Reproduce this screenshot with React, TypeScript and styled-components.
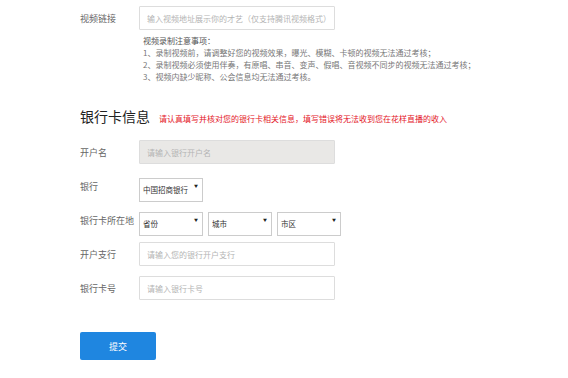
import React from "react";
import styled, { createGlobalStyle } from "styled-components";

const GlobalStyle = createGlobalStyle`
	html, body {
		margin: 0;
		padding: 0;
		background: #fff;
		font-family: "Noto Sans CJK SC", "Liberation Sans", sans-serif;
	}
`;

const Page = styled.div`
	padding: 6px 0 0 80px;
	width: 488px;
	height: 372px;
	overflow: hidden;
`;

const Row = styled.div<{ $mb?: number }>`
	display: flex;
	align-items: center;
	height: 24px;
	margin-bottom: ${(p) => p.$mb ?? 10}px;
`;

const Label = styled.label`
	width: 59px;
	flex: none;
	font-size: 9px;
	color: #666;
	white-space: nowrap;
`;

const TextBox = styled.input<{ $disabled?: boolean }>`
	box-sizing: border-box;
	width: 196px;
	height: 24px;
	padding: 0 7px;
	border: 1px solid #ddd;
	border-radius: 1px;
	outline: none;
	font-family: inherit;
	font-size: 8px;
	color: #333;
	background: ${(p) => (p.$disabled ? "#e9e8e6" : "#fff")};

	&::placeholder {
		color: #b4b4b4;
	}
`;

const SelectWrap = styled.div`
	position: relative;
	width: 64px;
	height: 24px;
	flex: none;

	&::after {
		content: "▼";
		position: absolute;
		right: 5px;
		top: 9px;
		font-size: 4px;
		color: #222;
		pointer-events: none;
	}
`;

const Select = styled.select`
	appearance: none;
	box-sizing: border-box;
	width: 100%;
	height: 100%;
	padding: 0 0 0 3px;
	border: 1px solid #ccc;
	border-radius: 0;
	background: #fff;
	font-family: inherit;
	font-size: 7.5px;
	color: #333;
	outline: none;
`;

const SelectGroup = styled.div`
	display: flex;
	gap: 5px;
`;

const Notes = styled.div`
	margin: 5px 0 0 63px;
	font-size: 8px;
	line-height: 12px;
	color: #777;
`;

const NotesTitle = styled.div`
	color: #555;
`;

const SectionHead = styled.div`
	display: flex;
	align-items: baseline;
	margin: 23px 0 14px;
	height: 20px;
`;

const Title = styled.h2`
	margin: 0;
	font-size: 14px;
	font-weight: normal;
	color: #222;
`;

const Warn = styled.span`
	margin-left: 9px;
	font-size: 8px;
	color: #e4151f;
`;

const Submit = styled.button`
	margin-top: 22px;
	width: 76px;
	height: 28px;
	border: none;
	border-radius: 2px;
	background: #1f86e0;
	color: #fff;
	font-family: inherit;
	font-size: 9px;
`;

export default function App() {
	return (
		<Page>
			<GlobalStyle />
			<Row $mb={0}>
				<Label>视频链接</Label>
				<TextBox placeholder="输入视频地址展示你的才艺（仅支持腾讯视频格式）" />
			</Row>
			<Notes>
				<NotesTitle>视频录制注意事项：</NotesTitle>
				<div>1、录制视频前，请调整好您的视频效果，曝光、模糊、卡顿的视频无法通过考核；</div>
				<div>2、录制视频必须使用伴奏，有原唱、串音、变声、假唱、音视频不同步的视频无法通过考核；</div>
				<div>3、视频内缺少昵称、公会信息均无法通过考核。</div>
			</Notes>
			<SectionHead>
				<Title>银行卡信息</Title>
				<Warn>请认真填写并核对您的银行卡相关信息，填写错误将无法收到您在花样直播的收入</Warn>
			</SectionHead>
			<Row>
				<Label>开户名</Label>
				<TextBox $disabled disabled placeholder="请输入银行开户名" />
			</Row>
			<Row>
				<Label>银行</Label>
				<SelectWrap>
					<Select defaultValue="cmb">
						<option value="cmb">中国招商银行</option>
					</Select>
				</SelectWrap>
			</Row>
			<Row>
				<Label>银行卡所在地</Label>
				<SelectGroup>
					<SelectWrap>
						<Select>
							<option>省份</option>
						</Select>
					</SelectWrap>
					<SelectWrap>
						<Select>
							<option>城市</option>
						</Select>
					</SelectWrap>
					<SelectWrap>
						<Select>
							<option>市区</option>
						</Select>
					</SelectWrap>
				</SelectGroup>
			</Row>
			<Row>
				<Label>开户支行</Label>
				<TextBox placeholder="请输入您的银行开户支行" />
			</Row>
			<Row>
				<Label>银行卡号</Label>
				<TextBox placeholder="请输入银行卡号" />
			</Row>
			<Submit>提交</Submit>
		</Page>
	);
}
